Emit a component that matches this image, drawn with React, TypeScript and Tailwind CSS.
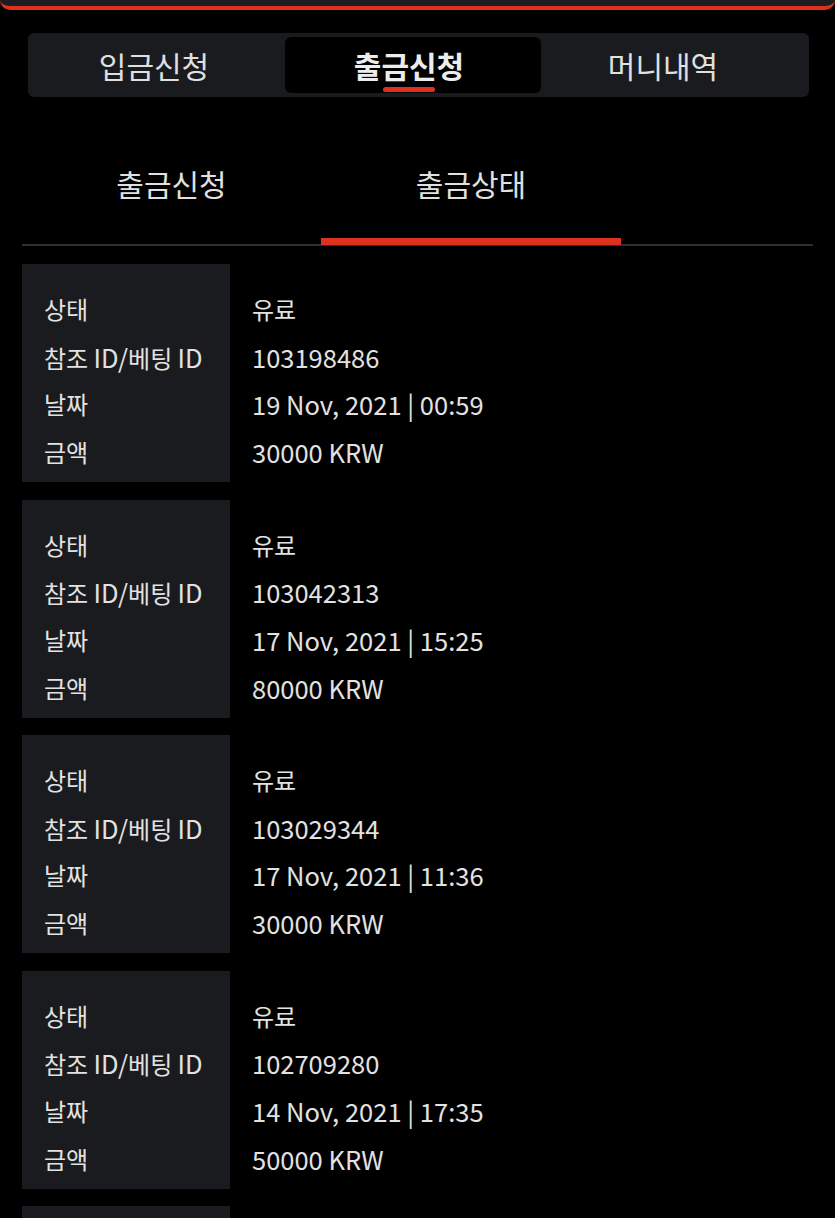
import React from "react";

const records = [
  { id: "103198486", date: "19 Nov, 2021 | 00:59", amount: "30000 KRW" },
  { id: "103042313", date: "17 Nov, 2021 | 15:25", amount: "80000 KRW" },
  { id: "103029344", date: "17 Nov, 2021 | 11:36", amount: "30000 KRW" },
  { id: "102709280", date: "14 Nov, 2021 | 17:35", amount: "50000 KRW" },
];

const Latin = ({ children }: { children: React.ReactNode }) => (
  <span className="text-[25.5px]">{children}</span>
);

const labels: React.ReactNode[] = [
  "상태",
  <>
    참조 <Latin>ID/</Latin>베팅 <Latin>ID</Latin>
  </>,
  "날짜",
  "금액",
];

const RecordCard = ({ item }: { item: (typeof records)[number] }) => {
  const values = [item.id, item.date, item.amount];
  return (
    <div className="flex flex-row w-full h-[218px] shrink-0">
      <div className="flex flex-col justify-start w-[208px] h-full bg-[#1a1b1f] pl-[22px] pt-[21px]">
        {labels.map((l, i) => (
          <p key={i} className="h-[47.7px] leading-[47.7px] text-[24px] text-[#e2e2e2] whitespace-nowrap">
            {l}
          </p>
        ))}
      </div>
      <div className="flex flex-col justify-start pl-[22px] pt-[21px] h-full">
        <p className="h-[47.7px] leading-[47.7px] text-[24px] text-[#e2e2e2]">유료</p>
        {values.map((v, i) => (
          <p key={i} className="h-[47.7px] leading-[47.7px] text-[25.5px] text-[#e2e2e2] whitespace-nowrap">
            {v}
          </p>
        ))}
      </div>
    </div>
  );
};

export default function App() {
  return (
    <div
      className="w-[835px] h-[1218px] overflow-hidden bg-black flex flex-col"
      style={{ fontFamily: '"Noto Sans CJK KR", "Noto Sans", sans-serif' }}
    >
      <div className="w-full h-[10px] shrink-0 bg-[#1c1d21] border-b-[4px] border-[#e0301e] rounded-b-[10px]"></div>

      <div className="flex flex-row shrink-0 items-center mt-[23px] ml-[28px] w-[781px] h-[64px] bg-[#1a1b1f] rounded-[6px] px-[4px]">
        <div className="w-[253px] h-[56px] pr-[9px] flex items-center justify-center text-[30px] text-[#e0e0e0]">
          입금신청
        </div>
        <div className="relative w-[256px] h-[56px] pr-[8px] bg-black rounded-[6px] flex items-center justify-center text-[30px] font-bold text-[#ececec]">
          출금신청
          <div className="absolute bottom-[1px] left-[98px] w-[52px] h-[5px] rounded-full bg-[#e0301e]"></div>
        </div>
        <div className="w-[264px] h-[56px] pr-[20px] flex items-center justify-center text-[30px] text-[#e0e0e0]">
          머니내역
        </div>
      </div>

      <div className="mx-[22px] mt-[35px] shrink-0 flex flex-row border-b-2 border-[#2c2e38] h-[114px]">
        <div className="w-[299px] h-full flex items-start justify-center pt-[31px] text-[30px] leading-[40px] text-[#e0e0e0]">
          출금신청
        </div>
        <div className="relative w-[300px] h-full flex items-start justify-center pt-[31px] text-[30px] leading-[40px] text-[#e0e0e0]">
          출금상태
          <div className="absolute left-0 right-0 bottom-[-1px] h-[7px] bg-[#e0301e]"></div>
        </div>
      </div>

      <div className="flex flex-col shrink-0 gap-[17.5px] mx-[22px] mt-[18px]">
        {records.map((r) => (
          <RecordCard key={r.id} item={r} />
        ))}
        <div className="w-[208px] h-[40px] shrink-0 bg-[#1a1b1f]"></div>
      </div>
    </div>
  );
}
